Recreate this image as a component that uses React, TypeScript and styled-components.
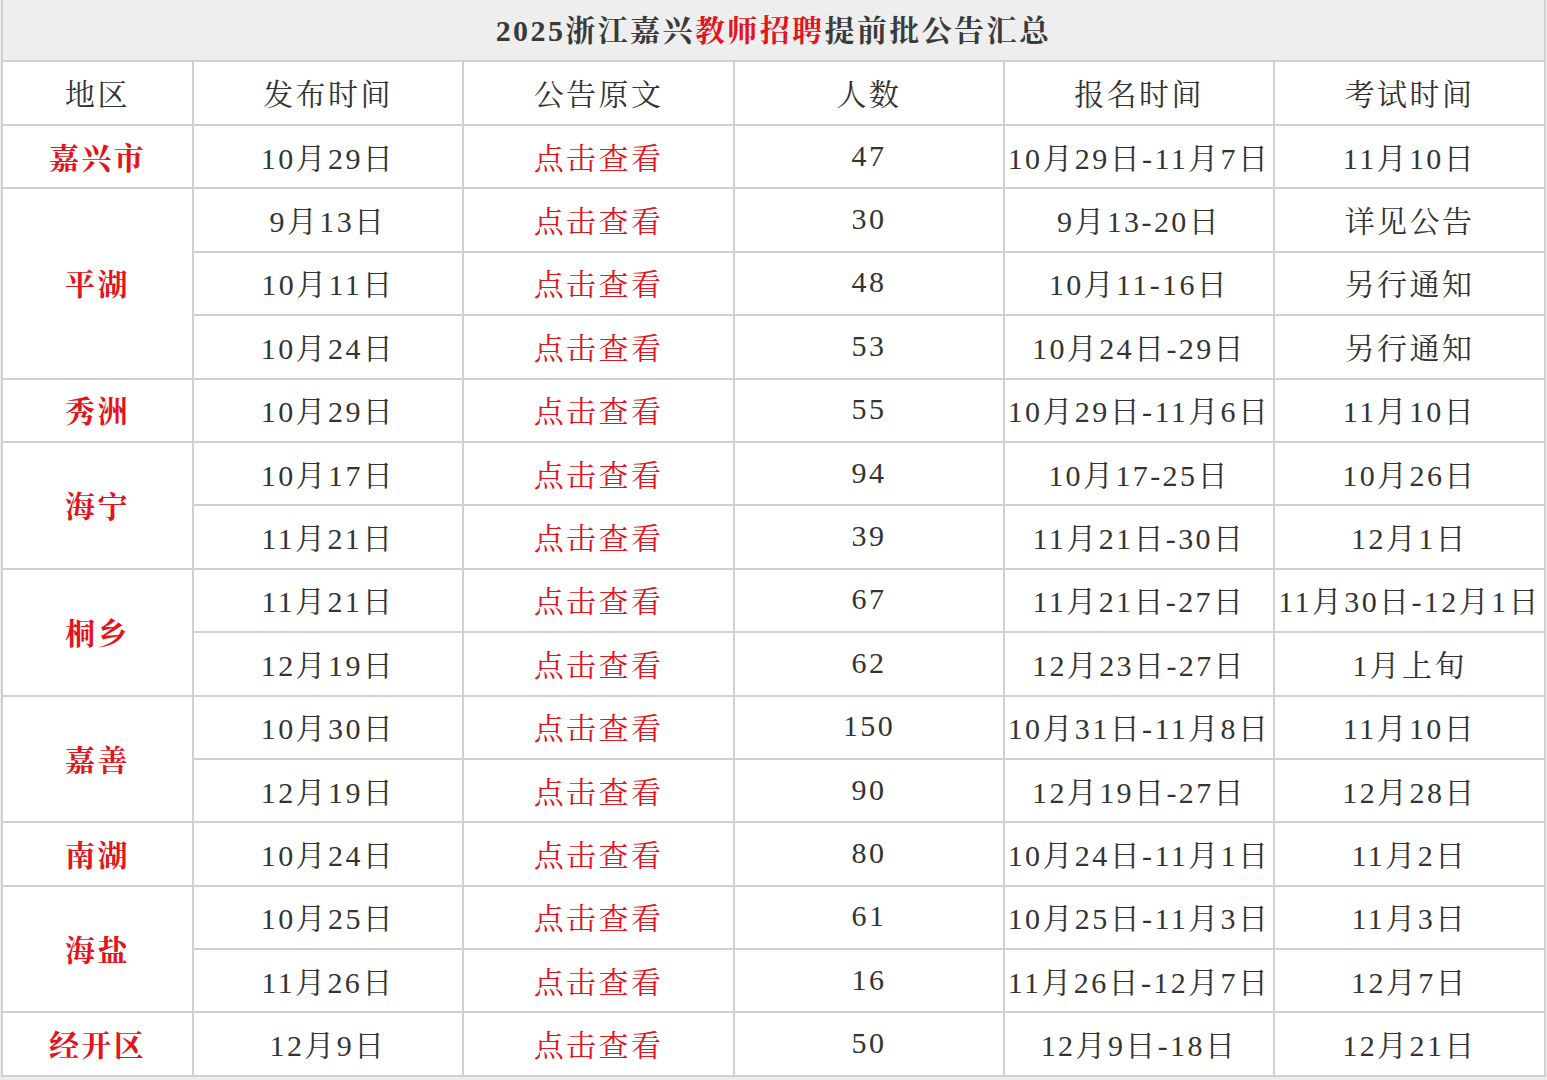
import React from "react";
import styled, { createGlobalStyle } from "styled-components";

const GlobalStyle = createGlobalStyle`
  html, body {
    margin: 0;
    padding: 0;
    background: #ededed;
  }
  body {
    padding: 0 4px 0 1px;
    font-family: "Liberation Serif", "Noto Serif CJK SC", "Noto Sans CJK SC", serif;
  }
`;

const Table = styled.table`
  width: 1543px;
  table-layout: fixed;
  border-collapse: collapse;
  background: #fff;
  color: #333;
  font-size: 30px;
  letter-spacing: 2.4px;
`;

const TitleCell = styled.th`
  height: 56px;
  padding: 0 0 4px;
  background: #eeeeee;
  border: 2px solid #d0d0d0;
  border-top: none;
  font-weight: bold;
  color: #3a3a3a;
  text-align: center;
`;

const Red = styled.span`
  color: #e3141b;
`;

const HeadCell = styled.th`
  height: 60px;
  padding: 0 0 2px;
  border: 2px solid #d0d0d0;
  font-weight: normal;
  text-align: center;
`;

const Cell = styled.td<{ $red?: boolean; $bold?: boolean }>`
  height: 59.4px;
  padding: 0 0 2px;
  border: 2px solid #d0d0d0;
  text-align: center;
  white-space: nowrap;
  color: ${(p) => (p.$red ? "#e3141b" : "#333")};
  font-weight: ${(p) => (p.$bold ? "bold" : "normal")};
`;

type Row = [string, string, string, string];

const groups: { region: string; rows: Row[] }[] = [
  { region: "嘉兴市", rows: [["10月29日", "47", "10月29日-11月7日", "11月10日"]] },
  {
    region: "平湖",
    rows: [
      ["9月13日", "30", "9月13-20日", "详见公告"],
      ["10月11日", "48", "10月11-16日", "另行通知"],
      ["10月24日", "53", "10月24日-29日", "另行通知"],
    ],
  },
  { region: "秀洲", rows: [["10月29日", "55", "10月29日-11月6日", "11月10日"]] },
  {
    region: "海宁",
    rows: [
      ["10月17日", "94", "10月17-25日", "10月26日"],
      ["11月21日", "39", "11月21日-30日", "12月1日"],
    ],
  },
  {
    region: "桐乡",
    rows: [
      ["11月21日", "67", "11月21日-27日", "11月30日-12月1日"],
      ["12月19日", "62", "12月23日-27日", "1月上旬"],
    ],
  },
  {
    region: "嘉善",
    rows: [
      ["10月30日", "150", "10月31日-11月8日", "11月10日"],
      ["12月19日", "90", "12月19日-27日", "12月28日"],
    ],
  },
  { region: "南湖", rows: [["10月24日", "80", "10月24日-11月1日", "11月2日"]] },
  {
    region: "海盐",
    rows: [
      ["10月25日", "61", "10月25日-11月3日", "11月3日"],
      ["11月26日", "16", "11月26日-12月7日", "12月7日"],
    ],
  },
  { region: "经开区", rows: [["12月9日", "50", "12月9日-18日", "12月21日"]] },
];

const headers = ["地区", "发布时间", "公告原文", "人数", "报名时间", "考试时间"];
const widths = [191, 270, 271, 270, 270, 271];

export default function App() {
  return (
    <>
      <GlobalStyle />
      <Table>
        <colgroup>
          {widths.map((w, i) => (
            <col key={i} style={{ width: w }} />
          ))}
        </colgroup>
        <thead>
          <tr>
            <TitleCell colSpan={6}>
              2025浙江嘉兴<Red>教师招聘</Red>提前批公告汇总
            </TitleCell>
          </tr>
          <tr>
            {headers.map((h) => (
              <HeadCell key={h}>{h}</HeadCell>
            ))}
          </tr>
        </thead>
        <tbody>
          {groups.map((g) =>
            g.rows.map((r, i) => (
              <tr key={g.region + i}>
                {i === 0 && (
                  <Cell $red $bold rowSpan={g.rows.length}>
                    {g.region}
                  </Cell>
                )}
                <Cell>{r[0]}</Cell>
                <Cell $red>点击查看</Cell>
                <Cell>{r[1]}</Cell>
                <Cell>{r[2]}</Cell>
                <Cell>{r[3]}</Cell>
              </tr>
            ))
          )}
        </tbody>
      </Table>
    </>
  );
}
